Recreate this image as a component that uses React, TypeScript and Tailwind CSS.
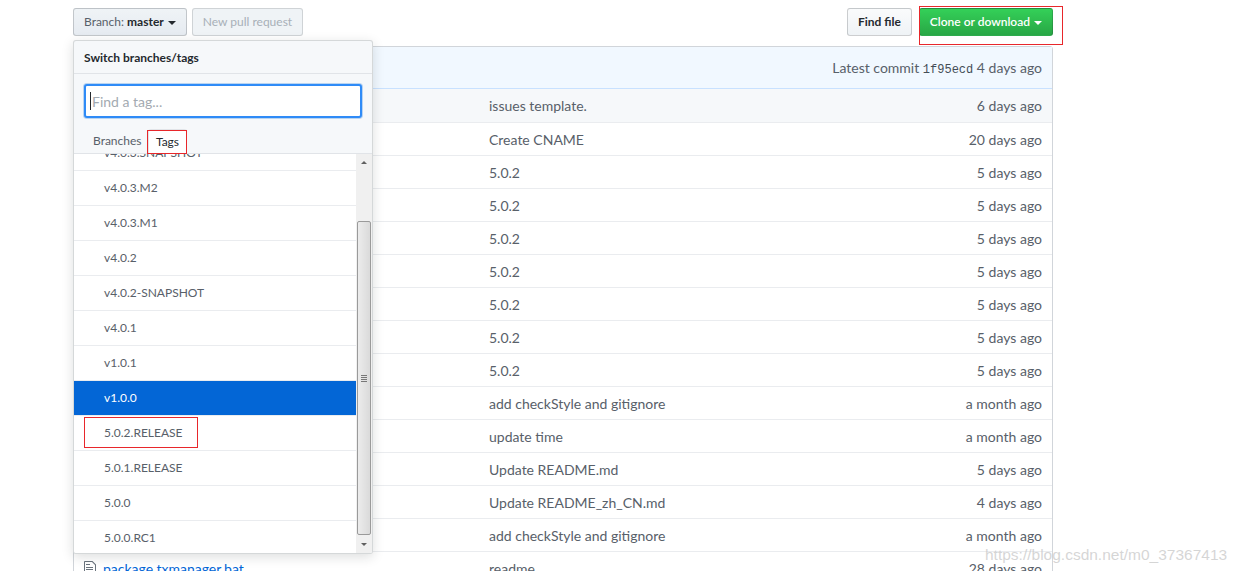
import React from 'react';

const font = { fontFamily: 'Lato, "Liberation Sans", sans-serif' };

const files: [string, string, string][] = [
  ['.github', 'issues template.', '6 days ago'],
  ['CNAME', 'Create CNAME', '20 days ago'],
  ['tx-client', '5.0.2', '5 days ago'],
  ['tx-core', '5.0.2', '5 days ago'],
  ['tx-logger', '5.0.2', '5 days ago'],
  ['tx-manager', '5.0.2', '5 days ago'],
  ['txlcn-tc', '5.0.2', '5 days ago'],
  ['txlcn-tm', '5.0.2', '5 days ago'],
  ['pom.xml', '5.0.2', '5 days ago'],
  ['checkstyle', 'add checkStyle and gitignore', 'a month ago'],
  ['LICENSE', 'update time', 'a month ago'],
  ['README.md', 'Update README.md', '5 days ago'],
  ['README_zh', 'Update README_zh_CN.md', '4 days ago'],
  ['.gitignore', 'add checkStyle and gitignore', 'a month ago'],
  ['package.txmanager.bat', 'readme', '28 days ago'],
];

const tags = [
  'v4.0.3.SNAPSHOT',
  'v4.0.3.M2',
  'v4.0.3.M1',
  'v4.0.2',
  'v4.0.2-SNAPSHOT',
  'v4.0.1',
  'v1.0.1',
  'v1.0.0',
  '5.0.2.RELEASE',
  '5.0.1.RELEASE',
  '5.0.0',
  '5.0.0.RC1',
];

function FileIcon() {
  return (
    <svg width="12" height="16" viewBox="0 0 12 16" className="text-[#6a737d]" fill="currentColor">
      <path d="M6 5H2V4h4v1zM2 8h7V7H2v1zm0 2h7V9H2v1zm0 2h7v-1H2v1zm10-7.5V14c0 .55-.45 1-1 1H1c-.55 0-1-.45-1-1V2c0-.55.45-1 1-1h7.5L12 4.5zM11 5L8 2H1v12h10V5z" />
    </svg>
  );
}

function Caret({ color = 'border-t-[#24292e]' }: { color?: string }) {
  return <span className={`inline-block ml-1 align-middle w-0 h-0 border-x-4 border-x-transparent border-t-4 ${color}`} />;
}

function ScrollBar() {
  return (
    <div className="w-[16px] bg-[#f0f0f0] flex flex-col items-center">
      <div className="h-[17px] w-full flex items-center justify-center">
        <span className="w-0 h-0 border-x-[3px] border-x-transparent border-b-[3px] border-b-[#606060]" />
      </div>
      <div className="h-[50px]" />
      <div className="w-[14px] h-[314px] rounded-[2px] border border-[#9a9a9a] bg-gradient-to-r from-[#ececec] to-[#dadada] flex flex-col items-center justify-center gap-[1px]">
        <span className="w-[6px] h-px bg-[#777]" />
        <span className="w-[6px] h-px bg-[#777]" />
        <span className="w-[6px] h-px bg-[#777]" />
        <span className="w-[6px] h-px bg-[#777]" />
      </div>
      <div className="flex-1 w-full flex items-center justify-center">
        <span className="w-0 h-0 border-x-[3px] border-x-transparent border-t-[3px] border-t-[#606060]" />
      </div>
    </div>
  );
}

function TagMenu() {
  return (
    <div className="absolute left-[73px] top-[40px] w-[300px] h-[514px] bg-[#f6f8fa] border border-[rgba(27,31,35,0.15)] rounded-[3px] shadow-[0_3px_12px_rgba(27,31,35,0.15)] flex flex-col overflow-hidden">
      <div className="h-[33px] pt-px px-[10px] flex items-center border-b border-[#e1e4e8] text-[12px] font-bold text-[#24292e]">
        Switch branches/tags
      </div>
      <div className="px-[10px] pt-[10px]">
        <div className="h-[34px] bg-white border-2 border-[#2f8bf7] rounded-[3px] shadow-[0_0_0_1px_rgba(3,102,214,0.25)] flex items-center px-[4px] text-[14px] text-[#a3aab1]">
          <span className="w-px h-[18px] bg-[#24292e] mr-[1px]" />
          Find a tag...
        </div>
      </div>
      <div className="h-[36px] px-[10px] flex items-end border-b border-[#e1e4e8] text-[12px]">
        <div className="w-[64px] pl-[9px] h-[24px] flex items-center text-[#586069]">Branches</div>
        <div className="w-[39px] h-[25px] -mb-px flex items-center justify-center bg-white border border-b-0 border-[#e1e4e8] rounded-t-[3px] text-[#24292e]">Tags</div>
      </div>
      <div className="flex-1 flex bg-white overflow-hidden">
        <div className="flex-1 overflow-hidden">
          <div className="-mt-[18px]">
            {tags.map((t) => (
              <div
                key={t}
                className={`h-[35px] pl-[30px] flex items-center text-[12px] border-b border-[#eaecef] ${
                  t === 'v1.0.0' ? 'bg-[#0366d6] text-white border-[#0366d6]' : 'text-[#586069]'
                }`}
              >
                {t}
              </div>
            ))}
          </div>
        </div>
        <ScrollBar />
      </div>
    </div>
  );
}

export default function App() {
  return (
    <div className="relative w-[1243px] h-[571px] overflow-hidden bg-white" style={font}>
      <div className="ml-[73px] w-[980px] pt-[8px]">
        {/* top bar */}
        <div className="flex items-center justify-between h-[28px]">
          <div className="flex gap-[5px]">
            <button className="h-[28px] px-[10px] text-[12px] rounded-[3px] border border-[rgba(27,31,35,0.2)] bg-gradient-to-b from-[#eff3f6] to-[#e6ebf1] text-[#24292e]">
              <span className="text-[#586069]">Branch: </span>
              <span className="font-bold">master</span>
              <Caret />
            </button>
            <button className="h-[28px] px-[10px] text-[12px] rounded-[3px] border border-[rgba(27,31,35,0.15)] bg-[#eff3f6] text-[#a8b0b8]">
              New pull request
            </button>
          </div>
          <div className="flex gap-[7px]">
            <button className="h-[28px] px-[10px] text-[12px] font-bold rounded-[3px] border border-[rgba(27,31,35,0.2)] bg-gradient-to-b from-[#fafbfc] to-[#eff3f6] text-[#24292e]">
              Find file
            </button>
            <button className="h-[28px] px-[10px] text-[12px] font-semibold rounded-[3px] border border-[rgba(27,31,35,0.2)] bg-gradient-to-b from-[#34d058] to-[#28a745] text-white">
              Clone or download
              <Caret color="border-t-white" />
            </button>
          </div>
        </div>

        {/* file table */}
        <div className="mt-[10px] border border-[#d1d5da] rounded-t-[3px]">
          <div className="h-[42px] bg-[#f1f8ff] border-b border-[#c8e1ff] flex items-center justify-end px-[10px] text-[14px] text-[#586069]">
            <span>
              Latest commit{' '}
              <span className="text-[12px] text-[#444d56]" style={{ fontFamily: '"Liberation Mono", monospace' }}>1f95ecd</span>
              {' '}4 days ago
            </span>
          </div>
          {files.map(([name, msg, age], i) => (
            <div
              key={i}
              className={`h-[33px] flex items-center text-[14px] ${i > 0 ? 'border-t border-[#eaecef]' : 'bg-[#f6f8fa]'}`}
            >
              <div className="w-[29px] pl-[10px] flex items-center">
                <FileIcon />
              </div>
              <div className="w-[386px] text-[#0366d6] truncate">{name}</div>
              <div className="flex-1 text-[#586069]">{msg}</div>
              <div className="pr-[10px] text-[#586069]">{age}</div>
            </div>
          ))}
        </div>
      </div>

      <TagMenu />

      {/* annotations */}
      <div className="absolute left-[919px] top-[6px] w-[144px] h-[39px] border border-[#e8272b]" />
      <div className="absolute left-[147px] top-[130px] w-[40px] h-[24px] border border-[#e8272b]" />
      <div className="absolute left-[84px] top-[417px] w-[114px] h-[31px] border border-[#e8272b]" />

      <div className="absolute left-[985px] top-[543px] text-[15.5px] text-[rgba(200,200,200,0.75)]" style={{ fontFamily: '"Liberation Sans", sans-serif' }}>
        https://blog.csdn.net/m0_37367413
      </div>
    </div>
  );
}
